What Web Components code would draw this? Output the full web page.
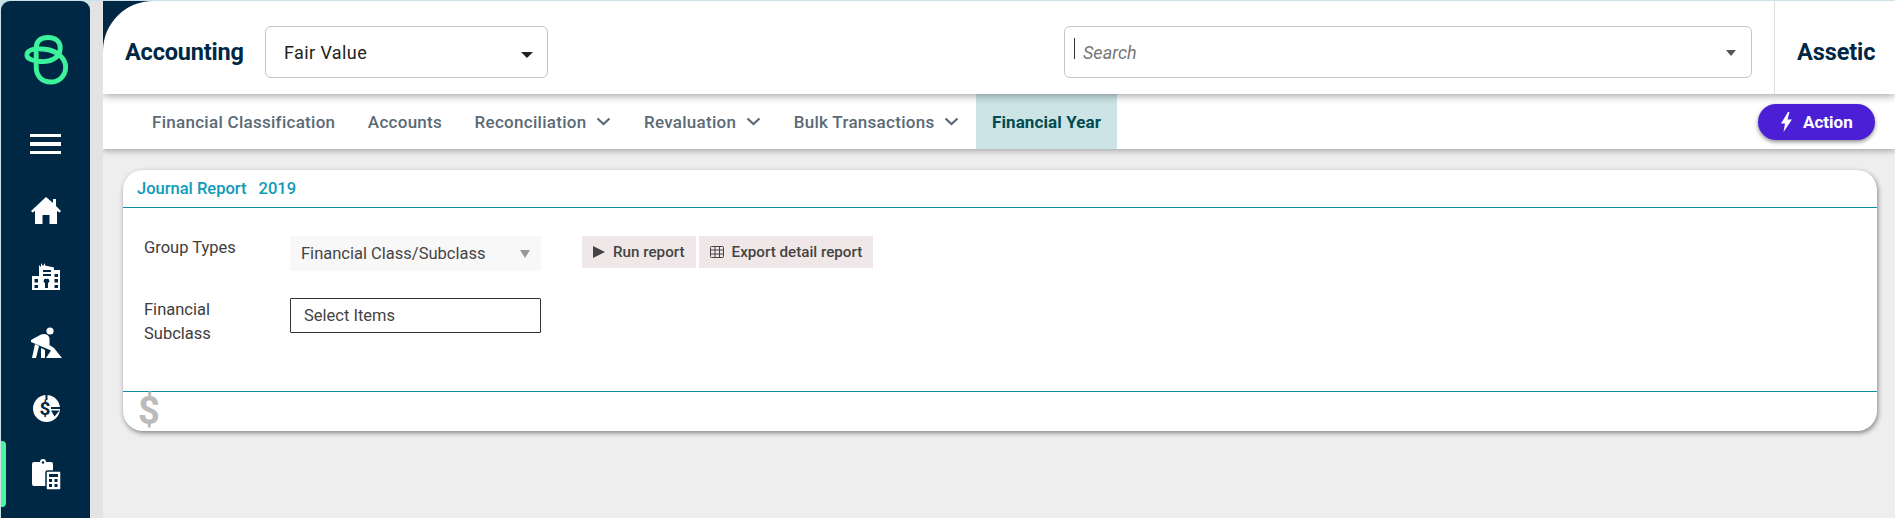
<!DOCTYPE html>
<html>
<head>
<meta charset="utf-8">
<title>Journal Report</title>
<style>
  html, body { margin: 0; height: 100%; }
  body {
    background: #c9e2e5;
    font-family: Roboto, "Liberation Sans", sans-serif;
    overflow: hidden;
  }
  app-shell { height: 518px; }
</style>
</head>
<body>
<app-shell>
  <app-sidebar slot="side">
    <side-item><svg width="30" height="27" viewBox="0 0 30 27" fill="#fff"><path d="M15 0L22 6V2H25V9L30 14 28.500 15.500 26 14V27H18.500V18H11.500V27H4V14L1.500 15.500 0 14Z"/></svg></side-item>
    <side-item><svg width="28" height="28" viewBox="0 0 28 28" fill="#fff"><path fill-rule="evenodd" d="M0 14H7V3L9 5V1L11 4 13 1V3.500L22 5.500V8H28V28H0ZM2.500 17V20.500H6V17ZM2.500 23V26H6V23ZM11 8V10H19V8ZM11 12V14H19V12ZM22.500 12V15H26V12ZM22.500 17V20.500H26V17ZM22.500 23V26H26V23ZM14.500 17A2 2 0 0 0 13 21V26H16V21A2 2 0 0 0 14.500 17Z"/></svg></side-item>
    <side-item><svg width="31" height="31" viewBox="0 0 31 31" fill="#fff"><circle cx="19" cy="4" r="3.600"/><path d="M0 13L10 7.500Q13 6.500 15.500 7.500 18.500 9 18.500 12V18L23 21 31 31H15L20 23.500 0 15Z"/><path d="M4 17L8 19 5 31H1ZM10 21L14 23V31H10Z"/></svg></side-item>
    <side-item><svg width="27" height="27" viewBox="0 0 27 27"><circle cx="13.500" cy="13.500" r="13.500" fill="#fff"/><path d="M13.500 0V5M18 13H27" stroke="#002845" stroke-width="2" fill="none"/><path d="M18 15.500L26.500 15.500 21.500 21.500Z" fill="#002845"/><text x="12" y="20" text-anchor="middle" font-family="Roboto" font-weight="700" font-size="19" fill="#002845">$</text></svg></side-item>
    <side-item active><svg width="29" height="32" viewBox="0 0 29 32"><path d="M2 4H8A3 3 0 0 1 14 4H19A2 2 0 0 1 21 6V26A2 2 0 0 1 19 28H2A2 2 0 0 1 0 26V6A2 2 0 0 1 2 4Z" fill="#fff"/><circle cx="11" cy="4.500" r="1.200" fill="#002845"/><rect x="14" y="13" width="15" height="19" rx="1.500" fill="#fff" stroke="#002845" stroke-width="1.500"/><rect x="17" y="16" width="9" height="3" fill="#002845"/><path d="M17 21h3v3h-3zM22.500 21h3v3h-3zM17 26h3v3h-3zM22.500 26h3v3h-3z" fill="#002845"/></svg></side-item>
  </app-sidebar>

  <app-header slot="top">
    <span slot="title">Accounting</span>
    <combo-box slot="module" style="width:283px">Fair Value</combo-box>
    <combo-box slot="search" search style="width:688px">Search</combo-box>
    <span slot="company">Assetic</span>
  </app-header>

  <app-nav slot="top">
    <nav-tab>Financial Classification</nav-tab>
    <nav-tab>Accounts</nav-tab>
    <nav-tab menu>Reconciliation</nav-tab>
    <nav-tab menu>Revaluation</nav-tab>
    <nav-tab menu>Bulk Transactions</nav-tab>
    <nav-tab active>Financial Year</nav-tab>
    <action-button slot="action">Action</action-button>
  </app-nav>

  <report-card>
    <span slot="title">Journal Report</span>
    <span slot="title">2019</span>
    <form-row label="Group Types">
      <group-select>Financial Class/Subclass</group-select>
      <tool-button icon="play">Run report</tool-button>
      <tool-button icon="table">Export detail report</tool-button>
    </form-row>
    <form-row label="Financial Subclass">
      <multi-select>Select Items</multi-select>
    </form-row>
  </report-card>
</app-shell>

<script>
  // Outer frame: sidebar on the left, grey strip, then the content column
  class AppShell extends HTMLElement {
    connectedCallback() {
      const shadow = this.attachShadow({ mode: "open" });
      shadow.innerHTML = `
        <style>
          :host { display: flex; padding: 1px 0 0 1px; box-sizing: border-box; }
          .main {
            flex: 1; min-width: 0; overflow: hidden; background: #eee;
            border-left: 13px solid #e3e3e3; display: flex; flex-direction: column;
          }
          .top { position: relative; z-index: 1; display: block; }
          .body { padding: 21px 18px 0 20px; }
        </style>
        <slot name="side"></slot>
        <div class="main">
          <div class="top"><slot name="top"></slot></div>
          <div class="body"><slot></slot></div>
        </div>`;
    }
  }

  class AppSidebar extends HTMLElement {
    connectedCallback() {
      const shadow = this.attachShadow({ mode: "open" });
      shadow.innerHTML = `
        <style>
          :host {
            display: flex; flex-direction: column; width: 89px; flex: none;
            background: #002845; border-radius: 9px 9px 0 0;
          }
          .logo { display: block; margin: 33px 0 0 22px; height: 51px; }
          .burger {
            height: 66px; margin-top: 26px; display: flex; flex-direction: column;
            justify-content: center; gap: 5px; padding-left: 29px;
          }
          .burger i { display: block; width: 31px; height: 3.500px; background: #fff; }
        </style>
        <svg class="logo" width="46" height="52" viewBox="0 0 46 52" fill="none" stroke="#3cf29b" stroke-width="5">
          <path d="M13 34C13 26 13 21 13 14 13 7 18 3.500 25 3.500 33 3.500 38 8 37.500 15 37 24 28 29 17 28 8 27 3 25 3.500 21 4 16 12 14 22 15.500 35 17 43 25 43 34 43 43 36 49 28 49 19 49 13 43 13 34Z"/>
        </svg>
        <div class="burger"><i></i><i></i><i></i></div>
        <slot></slot>`;
    }
  }

  class SideItem extends HTMLElement {
    connectedCallback() {
      const shadow = this.attachShadow({ mode: "open" });
      shadow.innerHTML = `
        <style>
          :host {
            display: flex; height: 66px; align-items: center; justify-content: center;
            position: relative; padding-left: 1px;
          }
          :host([active])::before {
            content: ""; position: absolute; left: 0; top: 0; bottom: 0; width: 5px;
            background: #4cf5a5; border-radius: 0 4px 4px 0;
          }
        </style>
        <slot></slot>`;
    }
  }

  class AppHeader extends HTMLElement {
    connectedCallback() {
      const shadow = this.attachShadow({ mode: "open" });
      shadow.innerHTML = `
        <style>
          :host {
            display: block; position: relative; z-index: 2;
            background: linear-gradient(#002845, #002845) no-repeat 0 0 / 60px 60px;
            box-shadow: 0 2px 8px rgba(0,0,0,.35);
          }
          .bar {
            height: 93px; background: #fff; border-top-left-radius: 50px;
            display: flex; align-items: center; box-sizing: border-box; padding: 9px 0 0 22px;
          }
          .title { font-size: 23.500px; font-weight: 700; color: #002845; width: 140px; letter-spacing: -.2px; }
          .gap { flex: 1; }
          .company {
            width: 121px; align-self: stretch; margin-top: -9px; border-left: 1px solid #ddd; box-sizing: border-box;
            display: flex; align-items: center; padding: 9px 0 0 22px;
            font-size: 23.500px; font-weight: 700; color: #002845; margin-left: 22px; letter-spacing: -.1px;
          }
        </style>
        <div class="bar">
          <div class="title"><slot name="title"></slot></div>
          <slot name="module"></slot>
          <div class="gap"></div>
          <slot name="search"></slot>
          <div class="company"><slot name="company"></slot></div>
        </div>`;
    }
  }

  class ComboBox extends HTMLElement {
    connectedCallback() {
      const shadow = this.attachShadow({ mode: "open" });
      shadow.innerHTML = `
        <style>
          :host {
            display: flex; align-items: center; height: 52px; box-sizing: border-box;
            border: 1px solid #c4c4c4; border-radius: 6px; padding: 0 14px 0 18px;
            font-size: 18px; letter-spacing: .4px; color: #222;
          }
          :host([search]) { font-style: italic; color: #777; padding: 0 15px 0 9px; letter-spacing: 0; }
          .cursor { display: none; width: 1px; height: 21px; background: #333; margin-right: 8px; margin-top: -7px; }
          :host([search]) .cursor { display: block; }
          .text { flex: 1; }
          .caret { width: 0; height: 0; border: 6px solid transparent; border-top: 6px solid #222; border-bottom: 0; margin-top: 6px; }
          :host([search]) .caret { border-width: 6px 5.500px 0; border-top-color: #555; margin-top: 2px; }
        </style>
        <div class="cursor"></div>
        <div class="text"><slot></slot></div>
        <div class="caret"></div>`;
    }
  }

  class AppNav extends HTMLElement {
    connectedCallback() {
      const shadow = this.attachShadow({ mode: "open" });
      shadow.innerHTML = `
        <style>
          :host {
            display: flex; height: 55px; background: #fff; align-items: stretch;
            padding: 0 20px 0 33px; box-shadow: 0 2px 6px rgba(0,0,0,.3); position: relative;
          }
          .tabs { display: flex; flex: 1; gap: .5px; }
          .action { display: flex; align-items: center; }
        </style>
        <div class="tabs"><slot></slot></div>
        <div class="action"><slot name="action"></slot></div>`;
    }
  }

  class NavTab extends HTMLElement {
    connectedCallback() {
      const shadow = this.attachShadow({ mode: "open" });
      const chevron = this.hasAttribute("menu")
        ? `<svg width="15" height="9" viewBox="0 0 15 9" fill="none" stroke="#5b6a76" stroke-width="2.200"><path d="M1.500 1.500L7.500 7 13.500 1.500"/></svg>` : "";
      shadow.innerHTML = `
        <style>
          :host {
            display: flex; align-items: center; gap: 10px; padding: 0 16px;
            font-size: 17px; font-weight: 500; color: #5b6a76; letter-spacing: .28px;
          }
          :host([active]) { background: #cce4e6; color: #004b50; font-weight: 700; letter-spacing: .1px; }
        </style>
        <slot></slot>${chevron}`;
    }
  }

  class ActionButton extends HTMLElement {
    connectedCallback() {
      const shadow = this.attachShadow({ mode: "open" });
      shadow.innerHTML = `
        <style>
          :host {
            display: flex; align-items: center; gap: 10px; height: 36px; width: 117px; box-sizing: border-box;
            padding-left: 22px; background: #4a1fd6; border-radius: 18px; color: #fff;
            font-size: 17px; font-weight: 700; box-shadow: 0 2px 4px rgba(0,0,0,.45);
          }
        </style>
        <svg width="13" height="20" viewBox="0 0 13 20" fill="#fff"><path d="M8 0L1 11.500H5L3.500 20 12 7.500H7.500L9.500 0Z"/></svg>
        <slot></slot>`;
    }
  }

  class ReportCard extends HTMLElement {
    connectedCallback() {
      const shadow = this.attachShadow({ mode: "open" });
      shadow.innerHTML = `
        <style>
          :host {
            display: block; background: #fff; border-radius: 20px;
            box-shadow: 1px 2px 5px rgba(0,0,0,.45);
          }
          .head {
            height: 38px; box-sizing: border-box; border-bottom: 1px solid #0f8ea8;
            padding: 0 0 0 14px; display: flex; align-items: center; gap: 12px;
            font-size: 16.500px; font-weight: 500; color: #0e9ab8;
          }
          .content { height: 183px; box-sizing: border-box; padding: 28px 21px 0; display: flex; flex-direction: column; gap: 27px; }
          .foot { height: 40px; box-sizing: border-box; border-top: 1px solid #0f8ea8; padding-left: 15px; }
          .foot span { font-size: 38px; line-height: 38px; font-weight: 700; color: #bbb; display: block; }
        </style>
        <div class="head"><slot name="title"></slot></div>
        <div class="content"><slot></slot></div>
        <div class="foot"><span>$</span></div>`;
    }
  }

  class FormRow extends HTMLElement {
    connectedCallback() {
      const shadow = this.attachShadow({ mode: "open" });
      shadow.innerHTML = `
        <style>
          :host { display: flex; align-items: flex-start; font-size: 16.500px; color: #3d3d3d; }
          .label { width: 146px; flex: none; line-height: 24px; padding-right: 40px; box-sizing: border-box; }
          .controls { display: flex; gap: 3px; }
        </style>
        <div class="label">${this.getAttribute("label")}</div>
        <div class="controls"><slot></slot></div>`;
    }
  }

  class GroupSelect extends HTMLElement {
    connectedCallback() {
      const shadow = this.attachShadow({ mode: "open" });
      shadow.innerHTML = `
        <style>
          :host {
            display: flex; align-items: center; justify-content: space-between; width: 251px; height: 35px;
            box-sizing: border-box; padding: 0 11px 0 11px; margin-right: 38px;
            background: #f8f8f8; color: #444;
          }
          .caret { width: 0; height: 0; border: 5.500px solid transparent; border-top: 8px solid #999; border-bottom: 0; }
        </style>
        <slot></slot><div class="caret"></div>`;
    }
  }

  class MultiSelect extends HTMLElement {
    connectedCallback() {
      const shadow = this.attachShadow({ mode: "open" });
      shadow.innerHTML = `
        <style>
          :host {
            display: flex; align-items: center; width: 251px; height: 35px; box-sizing: border-box;
            padding-left: 13px; border: 1px solid #333; border-radius: 1px; color: #444;
          }
        </style>
        <slot></slot>`;
    }
  }

  class ToolButton extends HTMLElement {
    connectedCallback() {
      const shadow = this.attachShadow({ mode: "open" });
      const icon = this.getAttribute("icon") === "play"
        ? `<svg width="12" height="12" viewBox="0 0 12 12" fill="#444"><path d="M0 0L12 6 0 12Z"/></svg>`
        : `<svg width="14" height="12" viewBox="0 0 14 12" fill="none" stroke="#444"><rect x=".5" y=".5" width="13" height="11" rx="1"/><path d="M.5 4H13.500M.5 8H13.500M5 .5V11.500M9.500 .5V11.500"/></svg>`;
      shadow.innerHTML = `
        <style>
          :host {
            display: flex; align-items: center; gap: 8px; height: 32px; padding: 0 11px;
            background: #f0e8e8; font-size: 15.200px; font-weight: 500; color: #444;
          }
        </style>
        ${icon}<slot></slot>`;
    }
  }

  customElements.define("app-shell", AppShell);
  customElements.define("app-sidebar", AppSidebar);
  customElements.define("side-item", SideItem);
  customElements.define("app-header", AppHeader);
  customElements.define("combo-box", ComboBox);
  customElements.define("app-nav", AppNav);
  customElements.define("nav-tab", NavTab);
  customElements.define("action-button", ActionButton);
  customElements.define("report-card", ReportCard);
  customElements.define("form-row", FormRow);
  customElements.define("group-select", GroupSelect);
  customElements.define("multi-select", MultiSelect);
  customElements.define("tool-button", ToolButton);
</script>
</body>
</html>
